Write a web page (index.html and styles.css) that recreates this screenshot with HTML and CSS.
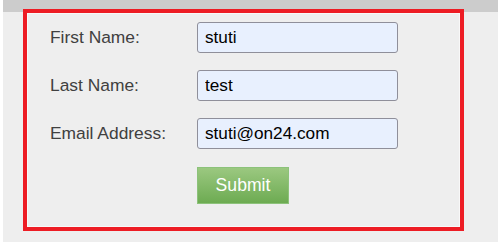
FILE: index.html
```html
<!DOCTYPE html>
<html>
<head>
<meta charset="utf-8">
<link rel="stylesheet" href="styles.css">
</head>
<body>
<div class="page">
  <div class="strip"></div>
  <div class="main">
    <div class="topbar"></div>
    <form class="form">
      <div class="row">
        <label class="label">First Name:</label>
        <input class="field" type="text" value="stuti">
      </div>
      <div class="row">
        <label class="label">Last Name:</label>
        <input class="field" type="text" value="test">
      </div>
      <div class="row">
        <label class="label">Email Address:</label>
        <input class="field" type="text" value="stuti@on24.com">
      </div>
      <div class="row">
        <span class="label"></span>
        <button class="submit" type="button">Submit</button>
      </div>
    </form>
  </div>
  <div class="highlight"></div>
</div>
</body>
</html>
```

FILE: styles.css
```css
html, body {
  margin: 0;
  padding: 0;
  background: #eeeeee;
}
.page {
  position: relative;
  display: flex;
  width: 498px;
  height: 242px;
  overflow: hidden;
  font-family: "Liberation Sans", Arial, sans-serif;
}
.strip {
  width: 3px;
  background: #ffffff;
  flex: none;
}
.main {
  flex: 1;
  display: flex;
  flex-direction: column;
  background: #eeeeee;
}
.topbar {
  height: 12px;
  background: #cccccc;
}
.form {
  display: flex;
  flex-direction: column;
  gap: 17px;
  padding: 10px 0 0 47px;
  margin: 0;
}
.row {
  display: flex;
  align-items: center;
  height: 31px;
}
.row:last-child {
  height: 37px;
  margin-top: 1px;
}
.label {
  width: 147px;
  flex: none;
  font-size: 17.4px;
  color: #404040;
}
.field {
  box-sizing: border-box;
  width: 201px;
  height: 31px;
  margin: 0;
  padding: 0 0 0 7px;
  border: 1px solid #8f8f9a;
  border-radius: 3px;
  background: #e8f0fe;
  font-family: "Liberation Sans", Arial, sans-serif;
  font-size: 17.2px;
  color: #000000;
  outline: none;
}
.submit {
  box-sizing: border-box;
  width: 92px;
  height: 37px;
  margin: 0;
  border: 1px solid #8cc27a;
  border-radius: 0;
  background: linear-gradient(#9bc880, #6dab52);
  color: #ffffff;
  font-family: "Liberation Sans", Arial, sans-serif;
  font-size: 17.6px;
  padding: 0;
}
.highlight {
  position: absolute;
  left: 23px;
  top: 9px;
  width: 441px;
  height: 222px;
  box-sizing: border-box;
  border: 4px solid #ed1c24;
  box-shadow: inset 0 0 0 1px #f8f8f8;
  pointer-events: none;
}
```
